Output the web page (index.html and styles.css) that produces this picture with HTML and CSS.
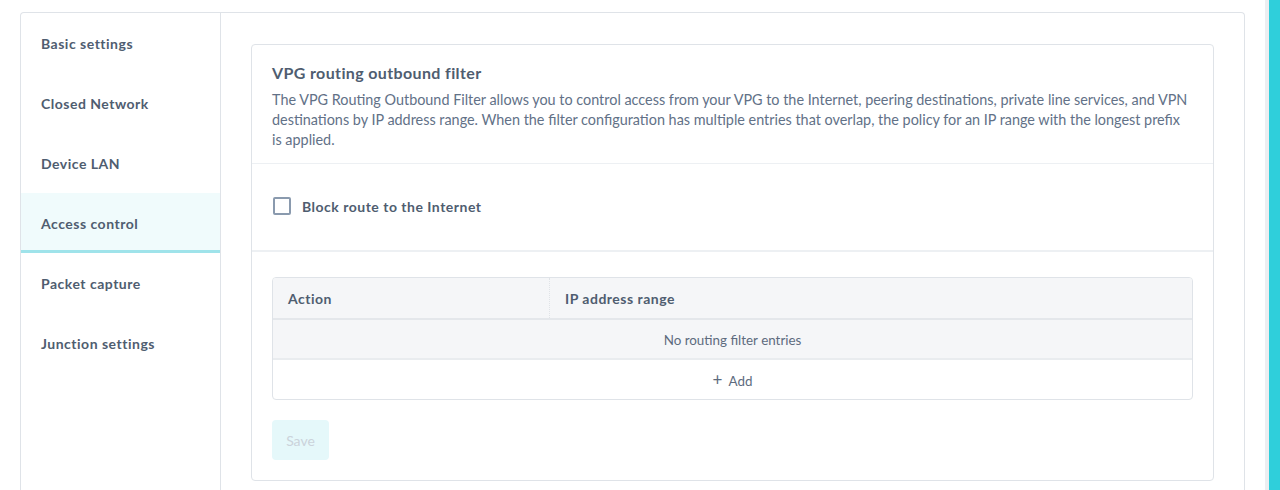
FILE: index.html
```html
<!DOCTYPE html>
<html lang="en">
<head>
    <meta charset="UTF-8">
    <meta name="viewport" content="width=device-width, initial-scale=1.0">
    <title>VPG settings</title>
    <link rel="stylesheet" href="styles.css">
</head>
<body>

    <div class="page">
        <div class="settings">
            <ul class="side-nav">
                <li>Basic settings</li>
                <li>Closed Network</li>
                <li>Device LAN</li>
                <li class="active">Access control</li>
                <li>Packet capture</li>
                <li>Junction settings</li>
            </ul>

            <div class="panel">
                <div class="card">
                    <div class="card-head">
                        <h3>VPG routing outbound filter</h3>
                        <p>The VPG Routing Outbound Filter allows you to control access from your VPG to the Internet, peering destinations, private line services, and VPN destinations by IP address range. When the filter configuration has multiple entries that overlap, the policy for an IP range with the longest prefix is applied.</p>
                    </div>

                    <div class="card-row">
                        <label class="check">
                            <span class="box"></span>
                            Block route to the Internet
                        </label>
                    </div>

                    <div class="card-body">
                        <div class="table">
                            <div class="thead">
                                <div class="th col-action">Action</div>
                                <div class="th">IP address range</div>
                            </div>
                            <div class="empty">No routing filter entries</div>
                            <div class="add"><span class="plus">+</span> Add</div>
                        </div>

                        <button class="button" disabled>Save</button>
                    </div>
                </div>
            </div>
        </div>

        <div class="scroll"></div>
    </div>

</body>
</html>
```

FILE: styles.css
```css
body {
    margin: 0;
    font-family: Lato, "Open Sans", sans-serif;
    background-color: #fff;
    color: #4f5d70;
    height: 490px;
    overflow: hidden;
}
.page {
    display: flex;
    height: 100%;
}
.settings {
    flex: 1;
    display: flex;
    margin: 12px 20px 0 20px;
    border: 1px solid #dfe3e8;
    border-bottom: none;
    border-radius: 4px 4px 0 0;
}
.scroll {
    width: 11px;
    background-color: #2fcfdb;
    border-left: 4px solid #eceef1;
}

/* sidebar */
.side-nav {
    list-style: none;
    margin: 0;
    padding: 0;
    width: 199px;
    border-right: 1px solid #dfe3e8;
}
.side-nav li {
    height: 60px;
    line-height: 62px;
    padding-left: 20px;
    font-size: 14px;
    font-weight: bold;
    letter-spacing: 0.5px;
    color: #4f5d70;
}
.side-nav li.active {
    background-color: #f0fbfc;
    height: 57px;
    border-bottom: 3px solid #9fe3ea;
}

/* content */
.panel {
    flex: 1;
    padding: 31px 30px 0 30px;
}
.card {
    border: 1px solid #dfe3e8;
    border-radius: 4px;
    height: 435px;
}
.card-head {
    padding: 18px 20px 13px 20px;
    border-bottom: 1px solid #edf0f3;
}
.card-head h3 {
    margin: 0 0 8px 0;
    font-size: 16px;
    letter-spacing: 0.37px;
    color: #4f5d70;
}
.card-head p {
    margin: 0;
    font-size: 14.4px;
    line-height: 20px;
    color: #627187;
}
.card-row {
    padding: 33px 21px 35px 21px;
    border-bottom: 2px solid #edf0f3;
}
.check {
    display: flex;
    align-items: center;
    gap: 11px;
    font-size: 14px;
    font-weight: bold;
    letter-spacing: 0.5px;
    color: #4f5d70;
}
.box {
    width: 14px;
    height: 14px;
    border: 2px solid #8a9aae;
    border-radius: 2px;
}
.card-body {
    padding: 25px 20px 0 20px;
}
.table {
    border: 1px solid #dfe3e8;
    border-radius: 4px;
    overflow: hidden;
}
.thead {
    display: flex;
    background-color: #f5f6f8;
    border-bottom: 2px solid #e4e7eb;
}
.th {
    height: 40px;
    line-height: 42px;
    padding-left: 15px;
    font-size: 14px;
    font-weight: bold;
    letter-spacing: 0.5px;
    color: #4f5d70;
}
.col-action {
    width: 261px;
    border-right: 1px dotted #e0e3e7;
}
.empty {
    height: 38px;
    line-height: 40px;
    text-align: center;
    font-size: 13.4px;
    color: #5d6b7e;
    background-color: #f5f6f8;
    border-bottom: 2px solid #e9ecef;
}
.add {
    height: 39px;
    line-height: 40px;
    text-align: center;
    font-size: 13.4px;
    color: #5d6b7e;
}
.plus {
    font-size: 17px;
    margin-right: 3px;
}
.button {
    margin-top: 20px;
    width: 57px;
    height: 40px;
    background-color: #e5f8fa;
    color: #cbd3da;
    border: none;
    border-radius: 4px;
    font-family: inherit;
    font-size: 14px;
}
```
